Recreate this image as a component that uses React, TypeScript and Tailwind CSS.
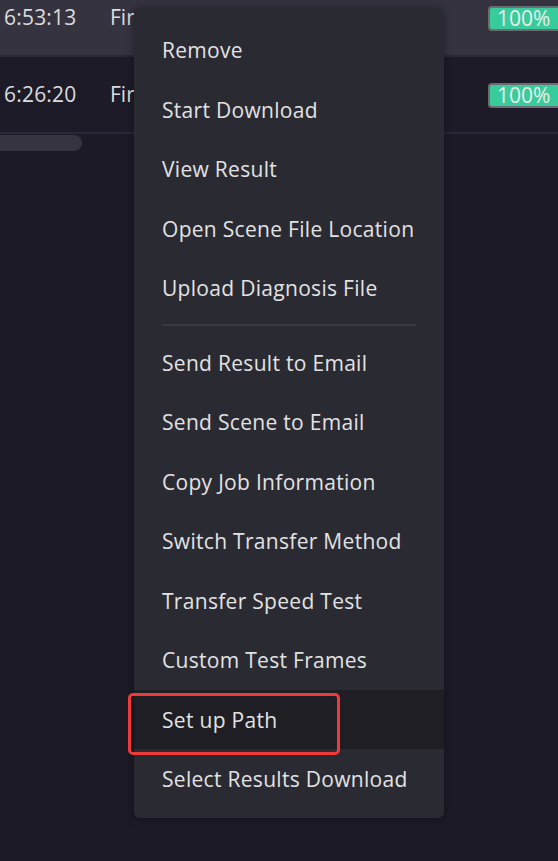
import React from 'react';

type Job = { time: string; name: string; progress: number };

const jobs: Job[] = [
  { time: '6:53:13', name: 'First_scene_render', progress: 100 },
  { time: '6:26:20', name: 'First_scene_render', progress: 100 },
];

type MenuEntry = { label: string; divider?: boolean };

const menu: MenuEntry[] = [
  { label: 'Remove' },
  { label: 'Start Download' },
  { label: 'View Result' },
  { label: 'Open Scene File Location' },
  { label: 'Upload Diagnosis File' },
  { label: '', divider: true },
  { label: 'Send Result to Email' },
  { label: 'Send Scene to Email' },
  { label: 'Copy Job Information' },
  { label: 'Switch Transfer Method' },
  { label: 'Transfer Speed Test' },
  { label: 'Custom Test Frames' },
  { label: 'Set up Path' },
  { label: 'Select Results Download' },
];

const JobRow: React.FC<{ job: Job; active?: boolean; first?: boolean }> = ({ job, active, first }) => (
  <div
    className={`flex items-center h-[77px] border-b-2 border-[#2a2834] ${first ? '-mt-[20px]' : ''} ${
      active ? 'bg-[#35333f]' : 'bg-[#1d1b27]'
    }`}
  >
    <span className="w-[110px] pl-[4px] text-[21px] tracking-[0.2px] text-[#dcdcde]">{job.time}</span>
    {/* name column is covered by the context menu past x=134 */}
    <span className="w-[24px] overflow-hidden whitespace-nowrap text-[21px] text-[#dcdcde]">{job.name}</span>
    <span className="ml-auto mr-[-24px] mt-[2px] flex h-[25px] w-[94px] items-center rounded-[4px] border-2 border-[#6c6c72] bg-[#38cc9c] pl-[7px] text-[21px] leading-none text-[#ececec]">
      {job.progress}%
    </span>
  </div>
);

const ContextMenu: React.FC<{ hovered: string }> = ({ hovered }) => (
  <div className="absolute left-[134px] top-[8px] w-[310px] rounded-[6px] bg-[#2a2a33] pt-[12px] pb-[9px] shadow-[0_0_10px_rgba(0,0,0,0.35)]">
    {menu.map((m, i) =>
      m.divider ? (
        <div key={i} className="flex h-[15px] items-center pl-[28px] pr-[28px]">
          <div className="h-[2px] w-full bg-[#38383f]" />
        </div>
      ) : (
        <div
          key={i}
          className={`flex h-[59.5px] items-center pl-[28px] pt-[2px] text-[21px] tracking-[0.3px] text-[#e2e2e2] ${
            m.label === hovered ? 'bg-[#1f1e25]' : ''
          }`}
        >
          {m.label}
        </div>
      )
    )}
  </div>
);

export default function App() {
  return (
    <div
      className="relative h-[861px] w-[558px] overflow-hidden bg-[#1c1a25]"
      style={{ fontFamily: '"Open Sans", "Noto Sans", sans-serif' }}
    >
      <JobRow job={jobs[0]} active first />
      <JobRow job={jobs[1]} />
      <div className="mt-[1px] h-[16px] w-[82px] rounded-r-full bg-[#35343f]" />

      <ContextMenu hovered="Set up Path" />

      {/* highlight around the focused entry */}
      <div className="pointer-events-none absolute left-[128px] top-[693px] h-[62px] w-[212px] rounded-[5px] border-[3px] border-[#f03a3a]" />
    </div>
  );
}
